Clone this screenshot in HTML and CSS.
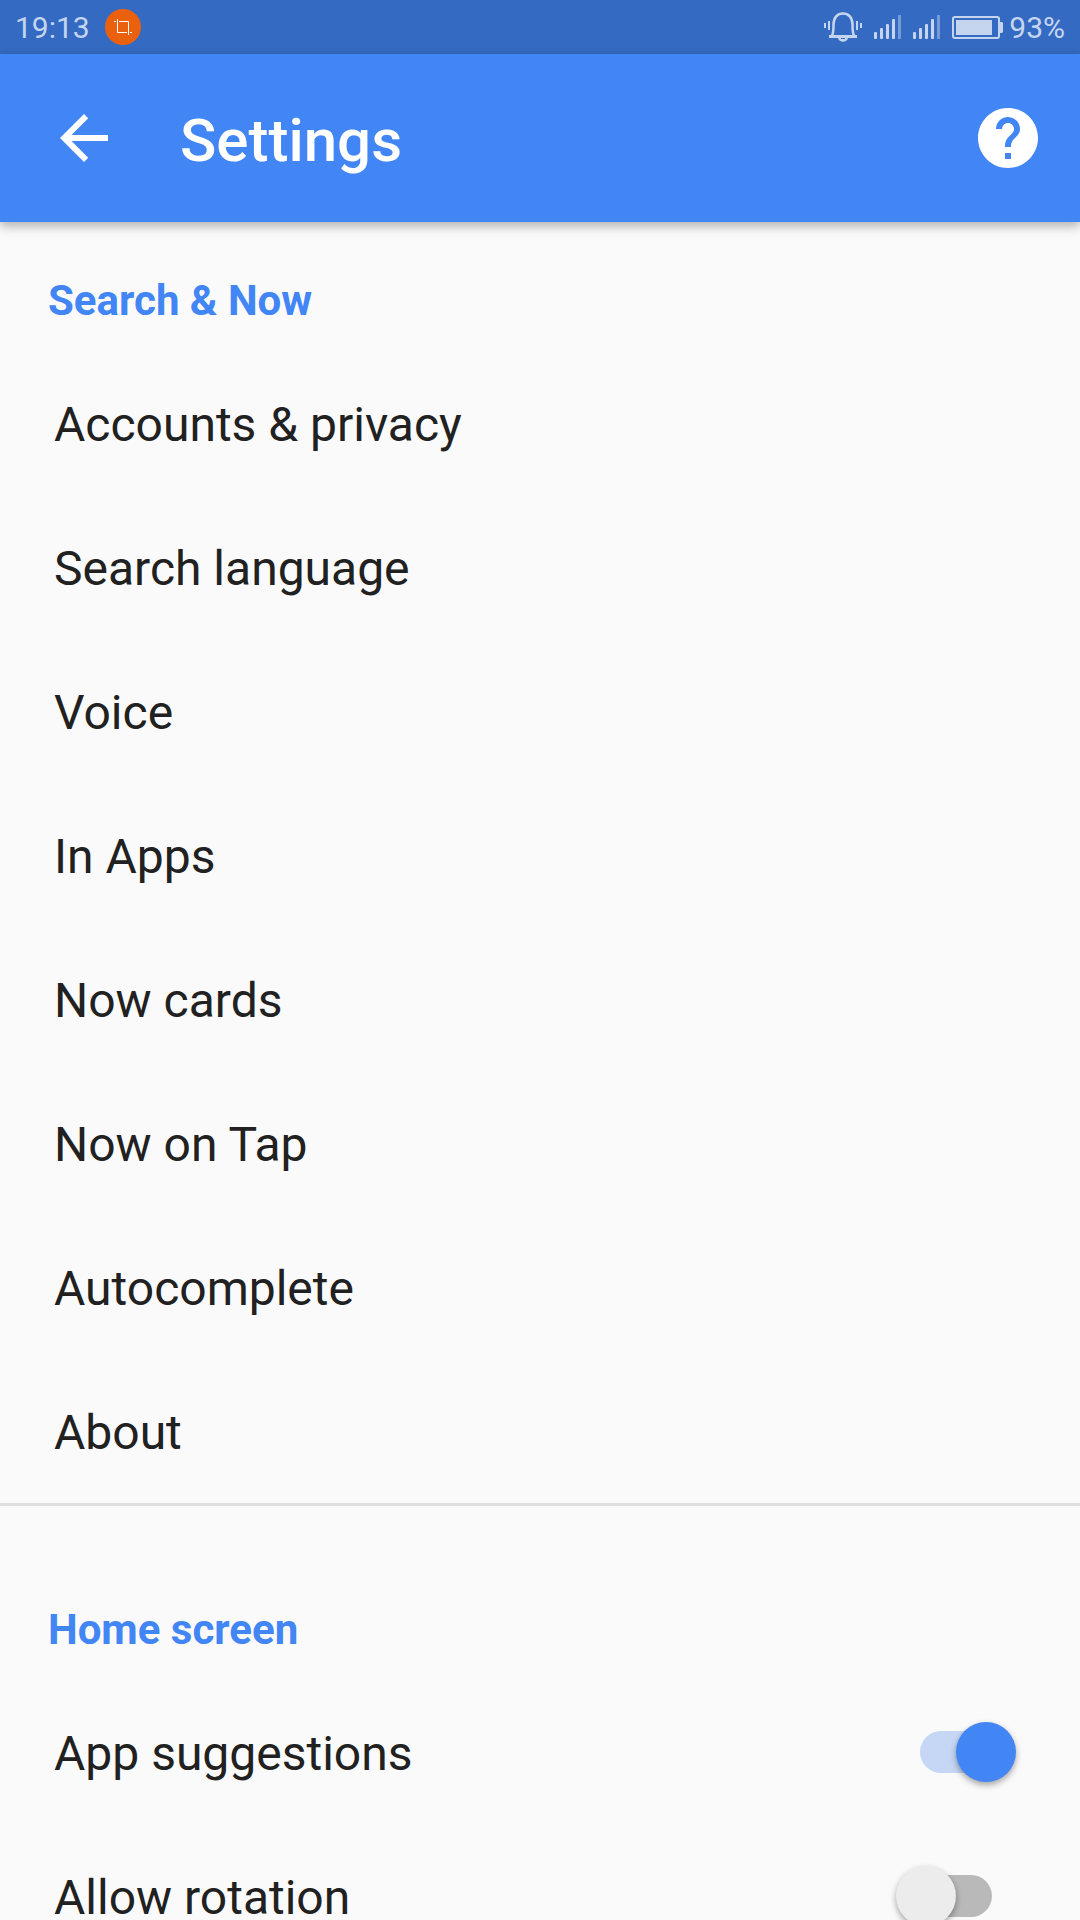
FILE: index.html
```html
<!DOCTYPE html>
<html lang="en">
<head>
    <meta charset="UTF-8">
    <meta name="viewport" content="width=device-width, initial-scale=1.0">
    <title>Settings</title>
    <link rel="stylesheet" href="styles.css">
</head>
<body>
    <div class="status-bar">
        <span class="clock">19:13</span>
        <svg class="capture-icon" width="36" height="36" viewBox="0 0 36 36">
            <circle cx="18" cy="18" r="18" fill="#eb600d"/>
            <path d="M9 12.500h2M14 12.500h9.500v13.500M12.500 10v13.500h9.500M25 23.500h2" fill="none" stroke="#fff" stroke-width="1"/>
        </svg>
        <div class="status-icons">
            <svg width="38" height="30" viewBox="0 0 38 30">
                <path d="M8 23.500c1.500-2 1.500-4 1.500-11C9.500 5.500 13.500 1.500 19 1.500s9.500 4 9.500 11c0 7 0 9 1.500 11" fill="none" stroke="currentColor" stroke-width="2.500"/>
                <path d="M5 23h28v3H5z" fill="currentColor"/>
                <path d="M14 26c1 5 9 5 10 0z" fill="currentColor"/>
                <path d="M17 26h4v1h-4z" fill="#346ac1"/>
                <path d="M1 11v5M5 9v9M33 9v9M37 11v5" stroke="currentColor" stroke-width="2"/>
            </svg>
            <svg width="27" height="24" viewBox="0 0 27 24" fill="currentColor">
                <rect x="0" y="17" width="3" height="7" rx="1"/>
                <rect x="6" y="13" width="3" height="11" rx="1"/>
                <rect x="12" y="9" width="3" height="15" rx="1"/>
                <rect x="18" y="4" width="3" height="20" rx="1"/>
                <rect x="24" y="0" width="3" height="24" opacity=".45"/>
            </svg>
            <svg width="27" height="24" viewBox="0 0 27 24" fill="currentColor">
                <rect x="0" y="17" width="3" height="7" rx="1"/>
                <rect x="6" y="13" width="3" height="11" rx="1"/>
                <rect x="12" y="9" width="3" height="15" rx="1"/>
                <rect x="18" y="4" width="3" height="20" rx="1"/>
                <rect x="24" y="0" width="3" height="24" opacity=".45"/>
            </svg>
            <svg width="51" height="23" viewBox="0 0 51 23" fill="currentColor">
                <rect x="1" y="1" width="46" height="21" rx="2" fill="none" stroke="currentColor" stroke-width="2"/>
                <rect x="4" y="4" width="36" height="15"/>
                <path d="M48 6h2l1 1v9l-1 1h-2z"/>
            </svg>
        </div>
        <span>93%</span>
    </div>

    <header class="app-bar">
        <button type="button" class="icon-btn" aria-label="Back">
            <svg width="72" height="72" viewBox="0 0 24 24" fill="currentColor">
                <path d="M20 11H7.830l5.590-5.590L12 4l-8 8 8 8 1.410-1.410L7.830 13H20v-2z"/>
            </svg>
        </button>
        <h1>Settings</h1>
        <button type="button" class="icon-btn" aria-label="Help">
            <svg width="72" height="72" viewBox="0 0 24 24" fill="currentColor">
                <path d="M12 2C6.480 2 2 6.480 2 12s4.480 10 10 10 10-4.480 10-10S17.520 2 12 2zm1 17h-2v-2h2v2zm2.070-7.750l-.9.920C13.450 12.900 13 13.500 13 15h-2v-.5c0-1.100.45-2.100 1.170-2.830l1.240-1.260c.37-.36.59-.86.59-1.410 0-1.100-.9-2-2-2s-2 .9-2 2H8c0-2.210 1.790-4 4-4s4 1.790 4 4c0 .88-.36 1.680-.93 2.250z"/>
            </svg>
        </button>
    </header>

    <main class="content">
        <section class="section">
            <h2>Search &amp; Now</h2>
            <a href="#accounts" class="row"><span>Accounts &amp; privacy</span></a>
            <a href="#language" class="row"><span>Search language</span></a>
            <a href="#voice" class="row"><span>Voice</span></a>
            <a href="#in-apps" class="row"><span>In Apps</span></a>
            <a href="#now-cards" class="row"><span>Now cards</span></a>
            <a href="#now-on-tap" class="row"><span>Now on Tap</span></a>
            <a href="#autocomplete" class="row"><span>Autocomplete</span></a>
            <a href="#about" class="row"><span>About</span></a>
        </section>
        <section class="section">
            <h2>Home screen</h2>
            <label class="row" for="suggestions">
                <span>App suggestions</span>
                <input type="checkbox" id="suggestions" class="switch" checked>
            </label>
            <label class="row" for="rotation">
                <span>Allow rotation</span>
                <input type="checkbox" id="rotation" class="switch">
            </label>
        </section>
    </main>
</body>
</html>
```
FILE: styles.css
```css
* {
    box-sizing: border-box;
}

body {
    font-family: Roboto, sans-serif;
    margin: 0;
    height: 100vh;
    display: flex;
    flex-direction: column;
    background-color: #fafafa;
    color: #212121;
}

svg {
    display: block;
}

.status-bar {
    display: flex;
    align-items: center;
    flex-shrink: 0;
    height: 54px;
    padding: 0 15px;
    background-color: #346ac1;
    color: #c5d5f0;
    font-size: 30px;
}

.capture-icon {
    margin-left: 15px;
}

.status-icons {
    display: flex;
    align-items: center;
    gap: 12px;
    margin-left: auto;
    margin-right: 6px;
}

.app-bar {
    display: flex;
    align-items: center;
    flex-shrink: 0;
    height: 168px;
    padding: 0 36px 0 48px;
    background-color: #4285f4;
    color: #ffffff;
    box-shadow: 0 4px 10px rgba(0, 0, 0, 0.3);
    z-index: 1;
}

.app-bar h1 {
    flex: 1;
    margin: 0 0 0 60px;
    padding-top: 4px;
    font-size: 60px;
    font-weight: 500;
}

.icon-btn {
    padding: 0;
    border: none;
    background: none;
    color: inherit;
    cursor: pointer;
}

.content {
    flex: 1;
    min-height: 0;
    overflow-x: hidden;
    overflow-y: auto;
    scrollbar-width: none;
}

.section + .section {
    border-top: 3px solid #dedede;
    padding-top: 45px;
}

.section h2 {
    margin: 0;
    padding: 55px 48px 26px;
    font-size: 42px;
    line-height: 48px;
    font-weight: bold;
    color: #4285f4;
}

.row {
    display: flex;
    align-items: center;
    justify-content: space-between;
    height: 144px;
    padding: 0 88px 0 54px;
    color: inherit;
    font-size: 48px;
    line-height: 48px;
    text-decoration: none;
    cursor: pointer;
}

.row span {
    padding-top: 4px;
}

.switch {
    appearance: none;
    position: relative;
    width: 72px;
    height: 42px;
    margin: 0;
    border-radius: 21px;
    background-color: #b9b9b9;
    cursor: pointer;
}

.switch::before {
    content: "";
    position: absolute;
    top: -9px;
    left: -24px;
    width: 60px;
    height: 60px;
    border-radius: 50%;
    background-color: #ececec;
    box-shadow: 0 3px 6px rgba(0, 0, 0, 0.35);
}

.switch:checked {
    background-color: #c6d7f5;
}

.switch:checked::before {
    left: 36px;
    background-color: #4285f4;
}
```
